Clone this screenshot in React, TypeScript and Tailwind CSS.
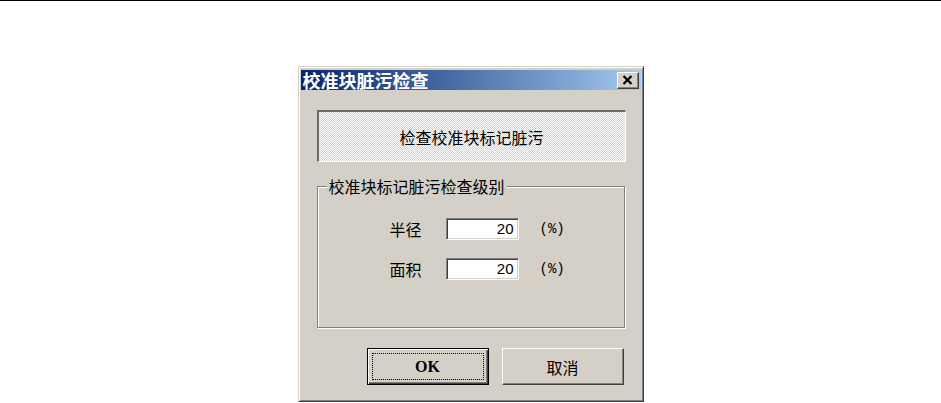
import React from "react";

const cjk = "font-['Noto_Sans_CJK_SC','Noto_Sans',sans-serif]";

const FieldRow: React.FC<{ label: string; value: string }> = ({ label, value }) => (
  <div className="flex items-center pl-[72px]">
    <span className={`${cjk} w-[33px] text-[16px] leading-[22px] text-black`}>{label}</span>
    {/* sunken edit box */}
    <div className="ml-[23px] flex h-[22px] w-[73px] items-center justify-end border-t border-l border-t-[#808080] border-l-[#808080] border-r border-b border-r-white border-b-white bg-white pr-[4px] shadow-[inset_1px_1px_0_#404040,inset_-1px_-1px_0_#d4d0c8]">
      <span className="font-['Liberation_Sans',sans-serif] text-[15px] leading-[18px] text-black">{value}</span>
    </div>
    <span className="ml-[21px] font-['Liberation_Mono',monospace] text-[14px] text-black">(%)</span>
  </div>
);

const App: React.FC = () => {
  return (
    <div className="min-h-screen bg-white">
      <div className="h-px bg-black" />

      <div className="flex justify-center pt-[65px]">
        {/* Dialog window */}
        <div className="w-[346px] border border-t-[#d4d0c8] border-l-[#d4d0c8] border-r-[#404040] border-b-[#404040] bg-[#d4d0c8] px-[2px] pt-[3px] pb-[16px] shadow-[inset_1px_1px_0_#ffffff,inset_-1px_-1px_0_#808080]">
          {/* Title bar */}
          <div className="flex h-[20px] items-center justify-between bg-linear-to-r from-[#0a246a] to-[#a6caf0] pl-[2px] pr-[2px]">
            <span className={`${cjk} text-[18px] font-bold leading-[20px] text-white`}>校准块脏污检查</span>
            <button className="flex h-[17px] w-[22px] items-center justify-center border border-t-white border-l-white border-r-[#404040] border-b-[#404040] bg-[#d4d0c8] shadow-[inset_-1px_-1px_0_#808080]">
              <svg width="11" height="10" viewBox="0 0 11 10">
                <path d="M1.5 1 L9.5 9 M9.5 1 L1.5 9" stroke="#000" strokeWidth="2.2" />
              </svg>
            </button>
          </div>

          <div className="px-[16px]">
            {/* Sunken banner */}
            <div className="mt-[20px] flex h-[52px] w-[309px] items-center justify-center border-t-2 border-l-2 border-t-[#6a6a6a] border-l-[#6a6a6a] border-r border-b border-r-white border-b-white bg-[image:repeating-conic-gradient(#ffffff_0_25%,#d4d0c8_0_50%)] bg-[length:2px_2px]">
              <span className={`${cjk} text-[16px] text-black`}>检查校准块标记脏污</span>
            </div>

            {/* Group box */}
            <div className="relative mt-[24px] h-[142px] w-[308px] border border-[#808080] shadow-[1px_1px_0_#ffffff,inset_1px_1px_0_#ffffff]">
              <span className={`${cjk} absolute -top-[11px] left-[9px] bg-[#d4d0c8] px-[2px] text-[16px] leading-[20px] text-black`}>
                校准块标记脏污检查级别
              </span>
              <div className="flex flex-col gap-[18px] pt-[31px]">
                <FieldRow label="半径" value="20" />
                <FieldRow label="面积" value="20" />
              </div>
            </div>

            {/* Buttons */}
            <div className="mt-[20px] flex justify-end gap-[13px] pr-[1px]">
              <button className="h-[37px] w-[122px] border border-black bg-[#d4d0c8] p-[4px] shadow-[inset_1px_1px_0_#ffffff,inset_-1px_-1px_0_#404040,inset_-2px_-2px_0_#808080]">
                <div className="flex h-full w-full items-center justify-center border border-dotted border-black">
                  <span className="font-['Liberation_Serif',serif] text-[16px] font-bold text-black">OK</span>
                </div>
              </button>
              <button className="flex h-[37px] w-[122px] items-center justify-center border border-t-white border-l-white border-r-[#404040] border-b-[#404040] bg-[#d4d0c8] shadow-[inset_-1px_-1px_0_#808080]">
                <span className={`${cjk} text-[16px] text-black`}>取消</span>
              </button>
            </div>
          </div>
        </div>
      </div>
    </div>
  );
};

export default App;
